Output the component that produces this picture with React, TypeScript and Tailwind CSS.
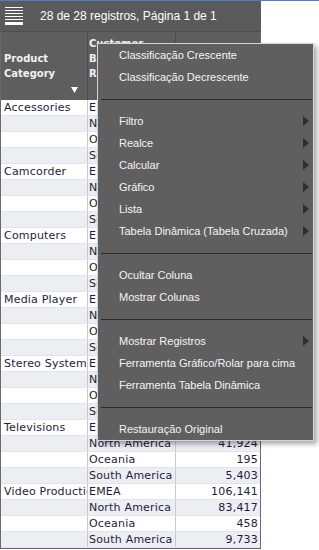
import React from "react";

const regions = ["EMEA", "North America", "Oceania", "South America"];

const groups: [string, string[]][] = [
  ["Accessories", ["21,340", "18,275", "1,206", "3,418"]],
  ["Camcorder", ["48,912", "52,604", "2,117", "7,830"]],
  ["Computers", ["31,455", "29,981", "903", "4,162"]],
  ["Media Player", ["12,708", "14,339", "366", "1,975"]],
  ["Stereo Systems", ["57,221", "49,860", "1,512", "8,094"]],
  ["Televisions", ["39,647", "41,924", "195", "5,403"]],
  ["Video Production", ["106,141", "83,417", "458", "9,733"]],
];

const menu: (null | { label: string; sub?: boolean })[] = [
  { label: "Classificação Crescente" },
  { label: "Classificação Decrescente" },
  null,
  { label: "Filtro", sub: true },
  { label: "Realce", sub: true },
  { label: "Calcular", sub: true },
  { label: "Gráfico", sub: true },
  { label: "Lista", sub: true },
  { label: "Tabela Dinâmica (Tabela Cruzada)", sub: true },
  null,
  { label: "Ocultar Coluna" },
  { label: "Mostrar Colunas" },
  null,
  { label: "Mostrar Registros", sub: true },
  { label: "Ferramenta Gráfico/Rolar para cima" },
  { label: "Ferramenta Tabela Dinâmica" },
  null,
  { label: "Restauração Original" },
];

const Hamburger = () => (
  <svg width="18" height="18" viewBox="0 0 18 18" className="block">
    {[0, 3, 6, 9, 12].map((y) => (
      <rect key={y} x="0" y={y} width="18" height="1" fill="#ffffff" />
    ))}
    <rect x="0" y="15" width="18" height="3" fill="#ffffff" />
  </svg>
);

const Arrow = () => (
  <svg width="6" height="10" viewBox="0 0 6 10" className="block">
    <polygon points="0,0 6,5 0,10" fill="#2f2f2f" />
  </svg>
);

export default function App() {
  return (
    <div className="relative h-[550px] w-[319px] overflow-hidden bg-white">
      <div className="h-px w-full bg-[#4a7ec6]" />
      <div className="w-[261px]">
        {/* toolbar */}
        <div className="flex h-[31px] items-center gap-[17px] border-b border-[#4f4f4f] bg-[#5a5a5a] pl-[5px]">
          <Hamburger />
          <span className="font-['Liberation_Sans',Arial,sans-serif] text-[12px] text-white">
            28 de 28 registros, Página 1 de 1
          </span>
        </div>

        {/* table */}
        <div className="border-x border-b border-[#6a6a6a] font-['DejaVu_Sans',Verdana,sans-serif] text-[11px] tracking-[0.2px]">
          <div className="flex h-[68px] bg-[#5e5e5e] font-bold text-[10px] leading-[15px] tracking-normal text-[#f2f2f2]">
            <div className="flex w-[87px] flex-col border-r border-[#4c4c4c] pl-[3px] pt-[19px]">
              <span>Product</span>
              <span>Category</span>
              <div className="flex justify-end pr-[9px] pt-[6px]">
                <svg width="7" height="6" viewBox="0 0 7 6" className="block">
                  <polygon points="0,0 7,0 3.5,6" fill="#ffffff" />
                </svg>
              </div>
            </div>
            <div className="flex w-[88px] flex-col border-r border-[#4c4c4c] pl-px pt-[4px]">
              <span>Customer</span>
              <span>Business</span>
              <span>Region</span>
            </div>
            <div className="flex flex-1 flex-col items-end pr-[3px] pt-[49px]">
              <span>Revenue</span>
            </div>
          </div>

          {groups.map(([cat, vals]) =>
            regions.map((r, i) => (
              <div
                key={cat + r}
                className={`flex h-4 border-b border-[#e3e3ec] leading-[15px] text-[#1d1d3a] ${
                  i % 2 === 0 ? "bg-white" : "bg-[#ededf4]"
                }`}
              >
                <div className="w-[87px] overflow-hidden whitespace-nowrap border-r border-[#c9c9d2] pl-[3px]">
                  {i === 0 ? cat : ""}
                </div>
                <div className="w-[88px] overflow-hidden whitespace-nowrap border-r border-[#c9c9d2] pl-px">
                  {r}
                </div>
                <div className="flex-1 pr-[2px] text-right">{vals[i]}</div>
              </div>
            ))
          )}
        </div>
      </div>

      {/* context menu */}
      <div className="absolute left-[97px] top-[43px] w-[217px] border border-[#d6d6d6] bg-[#5f5f5f] font-['Liberation_Sans',Arial,sans-serif] text-[11px] text-[#f4f4f4] shadow-[3px_3px_5px_rgba(0,0,0,0.35)]">
        {menu.map((m, idx) =>
          m === null ? (
            <div key={idx} className="flex h-[22px] items-center pl-[3px] pr-px">
              <div className="h-px w-full bg-[#2c2c2c]" />
            </div>
          ) : (
            <div key={idx} className="flex h-[22px] items-center justify-between pl-[21px] pr-[4px]">
              <span>{m.label}</span>
              {m.sub && <Arrow />}
            </div>
          )
        )}
      </div>
    </div>
  );
}
